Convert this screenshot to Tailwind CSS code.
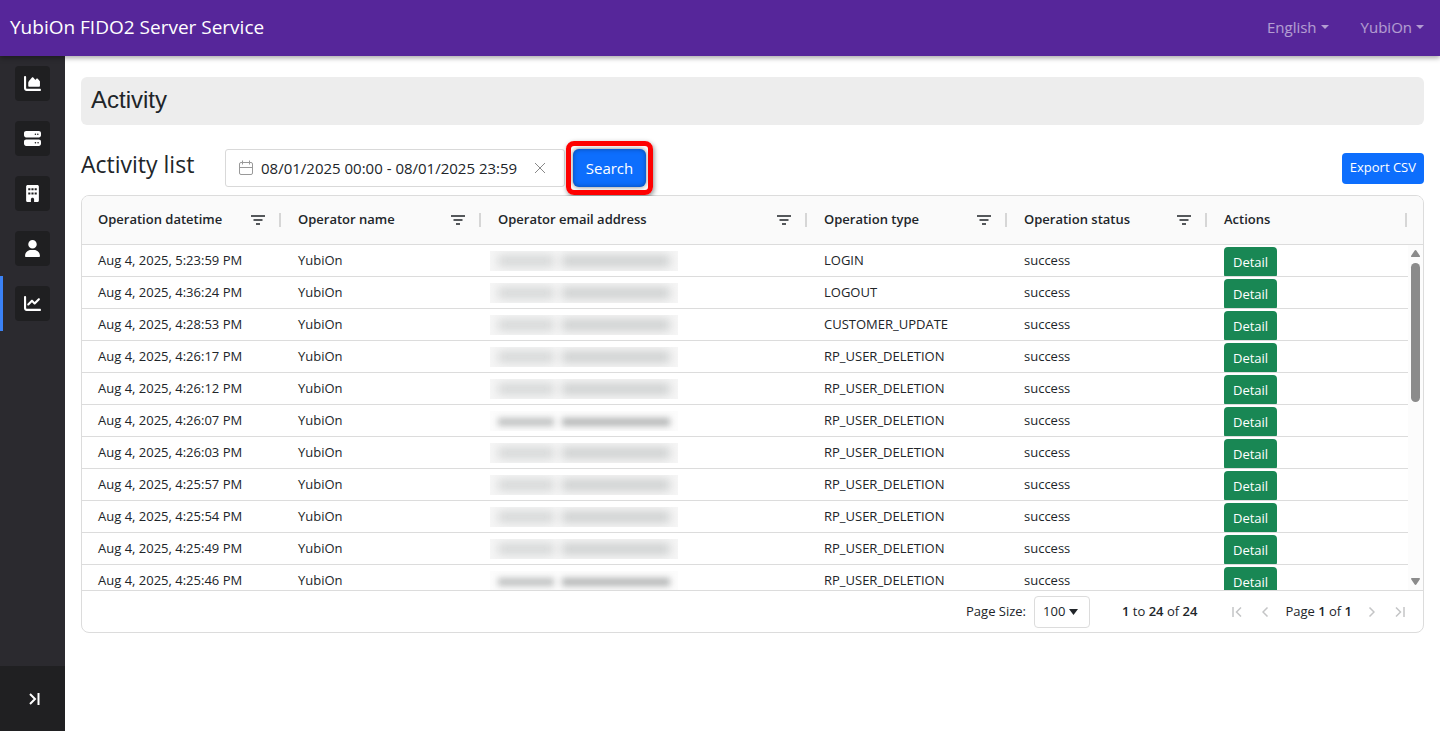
<!DOCTYPE html>
<html lang="en">
<head>
  <meta charset="UTF-8" />
  <meta name="viewport" content="width=device-width, initial-scale=1.0" />
  <title>YubiOn FIDO2 Server Service</title>
  <script src="https://cdn.jsdelivr.net/npm/@tailwindcss/browser@4"></script>
</head>
<body class="h-screen flex flex-col overflow-hidden bg-white text-[#212529] font-['Open_Sans','Noto_Sans',sans-serif] text-[13px]">

  <header class="relative z-10 h-14 shrink-0 flex items-center justify-between bg-[#56269a] pl-[10px] pr-4 pb-[2px] shadow-[0_2px_5px_rgba(0,0,0,0.35)]">
    <a href="#" class="text-[19px] text-white">YubiOn FIDO2 Server Service</a>
    <nav class="flex gap-8 text-[15px] text-white/55">
      <button type="button" class="flex items-center gap-1">English
        <svg class="w-2 h-1" viewBox="0 0 8 4" fill="currentColor"><path d="M0 0h8L4 4z" /></svg>
      </button>
      <button type="button" class="flex items-center gap-1">YubiOn
        <svg class="w-2 h-1" viewBox="0 0 8 4" fill="currentColor"><path d="M0 0h8L4 4z" /></svg>
      </button>
    </nav>
  </header>

  <div class="flex-1 flex min-h-0">
    <aside class="w-[65px] shrink-0 flex flex-col bg-[#2b2a2f] text-white">
      <a href="#" aria-label="Dashboard" class="h-[55px] flex items-center justify-center">
        <span class="size-[35px] flex items-center justify-center rounded bg-[#1f1f21]">
          <svg class="size-[17px]" viewBox="0 0 512 512" fill="currentColor"><path d="M64 64c0-17.700-14.300-32-32-32S0 46.300 0 64v336c0 44.200 35.800 80 80 80h400c17.700 0 32-14.300 32-32s-14.300-32-32-32H80c-8.800 0-16-7.200-16-16V64zm96 288h288c17.700 0 32-14.300 32-32V200c0-8-3-15-8-21l-57-66c-11-13-32-12-42 1l-18 23c-6 8-18 8-24 0l-52-64c-10-12-29-12-39 1l-90 104c-14 16-22 36-22 57v85c0 18 14 32 32 32z" /></svg>
        </span>
      </a>
      <a href="#" aria-label="Servers" class="h-[55px] flex items-center justify-center">
        <span class="size-[35px] flex items-center justify-center rounded bg-[#1f1f21]">
          <svg class="size-[17px]" viewBox="0 0 512 512" fill="currentColor" fill-rule="evenodd"><path d="M64 32C28.700 32 0 60.700 0 96v64c0 35.300 28.700 64 64 64h384c35.300 0 64-28.700 64-64V96c0-35.300-28.700-64-64-64H64zm280 72a24 24 0 1 1 0 48 24 24 0 1 1 0-48zm48 24a24 24 0 1 1 48 0 24 24 0 1 1-48 0zM64 288c-35.300 0-64 28.700-64 64v64c0 35.300 28.700 64 64 64h384c35.300 0 64-28.700 64-64v-64c0-35.300-28.700-64-64-64H64zm280 72a24 24 0 1 1 0 48 24 24 0 1 1 0-48zm56 24a24 24 0 1 1 48 0 24 24 0 1 1-48 0z" /></svg>
        </span>
      </a>
      <a href="#" aria-label="Customer" class="h-[55px] flex items-center justify-center">
        <span class="size-[35px] flex items-center justify-center rounded bg-[#1f1f21]">
          <svg class="w-[13px] h-[17px]" viewBox="0 0 384 512" fill="currentColor" fill-rule="evenodd"><path d="M48 0C21.500 0 0 21.500 0 48v416c0 26.500 21.500 48 48 48h96v-80c0-26.500 21.500-48 48-48s48 21.500 48 48v80h96c26.500 0 48-21.500 48-48V48c0-26.500-21.500-48-48-48H48zM64 96h64v64H64zm96 0h64v64h-64zm96 0h64v64h-64zM64 224h64v64H64zm96 0h64v64h-64zm96 0h64v64h-64z" /></svg>
        </span>
      </a>
      <a href="#" aria-label="Users" class="h-[55px] flex items-center justify-center">
        <span class="size-[35px] flex items-center justify-center rounded bg-[#1f1f21]">
          <svg class="w-[15px] h-[17px]" viewBox="0 0 448 512" fill="currentColor"><path d="M224 256a128 128 0 1 0 0-256 128 128 0 1 0 0 256zm-46 48C80 304 0 384 0 482c0 17 13 30 30 30h388c17 0 30-13 30-30 0-98-80-178-178-178h-92z" /></svg>
        </span>
      </a>
      <a href="#" aria-label="Activity" class="relative h-[55px] flex items-center justify-center">
        <span class="absolute left-0 inset-y-0 w-[3px] bg-[#3b82f6]"></span>
        <span class="size-[35px] flex items-center justify-center rounded bg-[#1f1f21]">
          <svg class="size-[17px]" viewBox="0 0 512 512" fill="currentColor"><path d="M64 64c0-17.700-14.300-32-32-32S0 46.300 0 64v336c0 44.200 35.800 80 80 80h400c17.700 0 32-14.300 32-32s-14.300-32-32-32H80c-8.800 0-16-7.200-16-16V64zm406.600 86.600c12.500-12.500 12.500-32.800 0-45.300s-32.800-12.500-45.300 0L320 210.700l-57.400-57.400c-12.500-12.500-32.800-12.500-45.300 0l-112 112c-12.500 12.500-12.500 32.800 0 45.300s32.800 12.500 45.300 0L240 221.300l57.400 57.400c12.500 12.500 32.800 12.500 45.300 0l128-128z" /></svg>
        </span>
      </a>
      <button type="button" aria-label="Expand menu" class="mt-auto h-[65px] flex items-center justify-center pl-1 bg-[#202022]">
        <svg class="w-[11px] h-3" viewBox="0 0 11 12" fill="none" stroke="currentColor" stroke-width="2"><path d="M1 1l5 5-5 5M9.500 0v12" /></svg>
      </button>
    </aside>

    <main class="flex-1 min-w-0 px-4 pt-[21px]">
      <h1 class="h-12 flex items-center rounded-md bg-[#ededed] px-[10px] pb-[2px] font-['Liberation_Sans',sans-serif] text-2xl">Activity</h1>

      <div class="mt-6 flex items-center">
        <h2 class="w-36 shrink-0 pb-2 text-[23px] leading-[30px] font-medium">Activity list</h2>
        <div class="w-[340px] h-[38px] flex items-center rounded-[3px] border border-[#d9d9d9] px-3">
          <svg class="size-4 shrink-0 text-[#999]" viewBox="0 0 16 16" fill="none" stroke="currentColor"><rect x="1.500" y="2.500" width="13" height="12" rx="1.500" /><path d="M1.500 7.500h13M4.500 .5v4M11.500 .5v4M7 2.500h2" /></svg>
          <input type="text" aria-label="Date range" value="08/01/2025 00:00 - 08/01/2025 23:59" class="ml-[7px] flex-1 min-w-0 text-[15px] outline-none" />
          <button type="button" aria-label="Clear" class="mr-[6px] text-[#888]">
            <svg class="size-3" viewBox="0 0 12 12" fill="none" stroke="currentColor"><path d="M1 1l10 10M11 1L1 11" /></svg>
          </button>
        </div>
        <button type="button" class="relative ml-2 w-[73px] h-[38px] rounded-md bg-[#0d6efd] text-[15px] text-white shadow-[0_0_5px_rgba(0,0,0,0.5),inset_0_0_5px_rgba(0,0,0,0.35)]">Search
          <span class="absolute -inset-x-[7px] -inset-y-2 rounded-lg border-5 border-[#fe0000] shadow-[1px_2px_5px_rgba(0,0,0,0.45)]"></span>
        </button>
        <button type="button" class="ml-auto h-[31px] px-2 rounded bg-[#0d6efd] text-[13px] text-white">Export CSV</button>
      </div>

      <section class="mt-2 overflow-hidden rounded-lg border border-[#dcdcdc]">
        <div class="relative">
          <div class="h-[394px] overflow-y-auto [scrollbar-width:none]">
            <table class="w-full table-fixed border-separate border-spacing-0 text-left">
              <thead class="sticky top-0 z-10 bg-[#fafafa]">
                <tr id="headRow"></tr>
              </thead>
              <tbody id="rows"></tbody>
            </table>
          </div>
          <div class="absolute right-0 bottom-0 top-[49px] w-[15px] flex flex-col items-center bg-[#fcfcfc] py-[5px] text-[#8b8b8b]">
            <svg class="w-[9px] h-[7px] shrink-0" viewBox="0 0 9 7" fill="currentColor"><path d="M3.500 .7q1-1.200 2 0L9 6q.2 1-1 1H1Q-.2 7 0 6z" /></svg>
            <div class="mt-[6px] w-[9px] h-[139px] rounded-full bg-[#8b8b8b]"></div>
            <svg class="mt-auto w-[9px] h-[7px] shrink-0 rotate-180" viewBox="0 0 9 7" fill="currentColor"><path d="M3.500 .7q1-1.200 2 0L9 6q.2 1-1 1H1Q-.2 7 0 6z" /></svg>
          </div>
        </div>

        <footer class="h-[42px] flex items-center justify-end border-t border-[#dcdcdc] pr-[18px]">
          <label for="pageSize">Page Size:</label>
          <div class="relative ml-2">
            <select id="pageSize" class="w-14 h-8 appearance-none rounded border border-[#dcdcdc] bg-white pl-2">
              <option>100</option>
            </select>
            <svg class="absolute right-3 top-[13px] w-[9px] h-[6px] pointer-events-none" viewBox="0 0 9 6" fill="currentColor"><path d="M0 0h9L4.500 6z" /></svg>
          </div>
          <p class="ml-8"><b class="font-semibold">1</b> to <b class="font-semibold">24</b> of <b class="font-semibold">24</b></p>
          <div class="ml-[35px] flex items-center text-[#c4c5c6]">
            <button type="button" aria-label="First page"><svg class="w-[10px] h-[10px]" viewBox="0 0 10 10" fill="none" stroke="currentColor" stroke-width="1.500"><path d="M1 0v10M9 .5L4.500 5 9 9.500" /></svg></button>
            <button type="button" aria-label="Previous page" class="ml-5"><svg class="w-[7px] h-[10px]" viewBox="0 0 7 10" fill="none" stroke="currentColor" stroke-width="1.500"><path d="M5.500 .5L1 5l4.500 4.500" /></svg></button>
            <p class="mx-4 text-[#212529]">Page <b class="font-semibold">1</b> of <b class="font-semibold">1</b></p>
            <button type="button" aria-label="Next page" class="mr-5"><svg class="w-[7px] h-[10px]" viewBox="0 0 7 10" fill="none" stroke="currentColor" stroke-width="1.500"><path d="M1.500 .5L6 5 1.500 9.500" /></svg></button>
            <button type="button" aria-label="Last page"><svg class="w-[10px] h-[10px]" viewBox="0 0 10 10" fill="none" stroke="currentColor" stroke-width="1.500"><path d="M1 .5L5.500 5 1 9.500M9 0v10" /></svg></button>
          </div>
        </footer>
      </section>
    </main>
  </div>

  <script>
    const headRow = document.getElementById("headRow");
    const rows = document.getElementById("rows");

    const columns = [
      { title: "Operation datetime", width: "w-[200px]" },
      { title: "Operator name", width: "w-[200px]" },
      { title: "Operator email address", width: "" },
      { title: "Operation type", width: "w-[200px]" },
      { title: "Operation status", width: "w-[200px]" },
      { title: "Actions", width: "w-[200px]", noFilter: true }
    ];

    // mask: how the hidden address is smudged
    const activities = [
      { time: "5:23:59", type: "LOGIN", mask: "soft" },
      { time: "4:36:24", type: "LOGOUT", mask: "soft" },
      { time: "4:28:53", type: "CUSTOMER_UPDATE", mask: "soft" },
      { time: "4:26:17", type: "RP_USER_DELETION", mask: "soft" },
      { time: "4:26:12", type: "RP_USER_DELETION", mask: "soft" },
      { time: "4:26:07", type: "RP_USER_DELETION", mask: "sharp" },
      { time: "4:26:03", type: "RP_USER_DELETION", mask: "soft" },
      { time: "4:25:57", type: "RP_USER_DELETION", mask: "soft" },
      { time: "4:25:54", type: "RP_USER_DELETION", mask: "soft" },
      { time: "4:25:49", type: "RP_USER_DELETION", mask: "soft" },
      { time: "4:25:46", type: "RP_USER_DELETION", mask: "sharp" }
    ];

    const masks = {
      soft: `<div class="w-[188px] h-5 overflow-hidden bg-[#f6f6f6] px-2 py-1">
          <div class="h-3 flex gap-2 blur-[5px]"><i class="w-14 bg-[#d6d8d8]"></i><i class="flex-1 bg-[#cfd1d1]"></i></div>
        </div>`,
      sharp: `<div class="w-[188px] h-5 overflow-hidden bg-[#fcfcfc] px-2 py-[7px]">
          <div class="h-2 flex gap-2 blur-[3px]"><i class="w-14 bg-[#bfc1c1]"></i><i class="flex-1 bg-[#b4b6b6]"></i></div>
        </div>`
    };

    headRow.innerHTML = columns.map((col) => `
      <th class="${col.width} h-[49px] p-0 border-b border-[#dcdcdc] font-semibold">
        <div class="flex items-center pl-4">
          <span class="flex-1">${col.title}</span>
          ${col.noFilter ? "" : `<button type="button" aria-label="Filter" class="mr-[14px] text-[#55585b]">
            <svg class="w-[14px] h-[10px]" viewBox="0 0 14 10" fill="none" stroke="currentColor" stroke-width="2"><path d="M0 1h14M2.500 5h9M5 9h4" /></svg>
          </button>`}
          <span class="w-[2px] h-[14px] mr-px bg-[#d6d6d6]"></span>
        </div>
      </th>`).join("") + `<td class="w-[15px] border-b border-[#dcdcdc]"></td>`;

    rows.innerHTML = activities.map((a) => `
      <tr class="h-8 [&>td]:border-b [&>td]:border-[#dcdcdc] [&>td]:p-0 [&>td]:pl-4">
        <td>Aug 4, 2025, ${a.time} PM</td>
        <td>YubiOn</td>
        <td><div class="-ml-2">${masks[a.mask]}</div></td>
        <td>${a.type}</td>
        <td>success</td>
        <td class="align-top"><div class="h-[31px] overflow-hidden pt-[2px]"><button type="button" class="block h-[31px] px-[9px] rounded bg-[#198754] text-[13px] text-white">Detail</button></div></td>
      </tr>`).join("");
  </script>
</body>
</html>
